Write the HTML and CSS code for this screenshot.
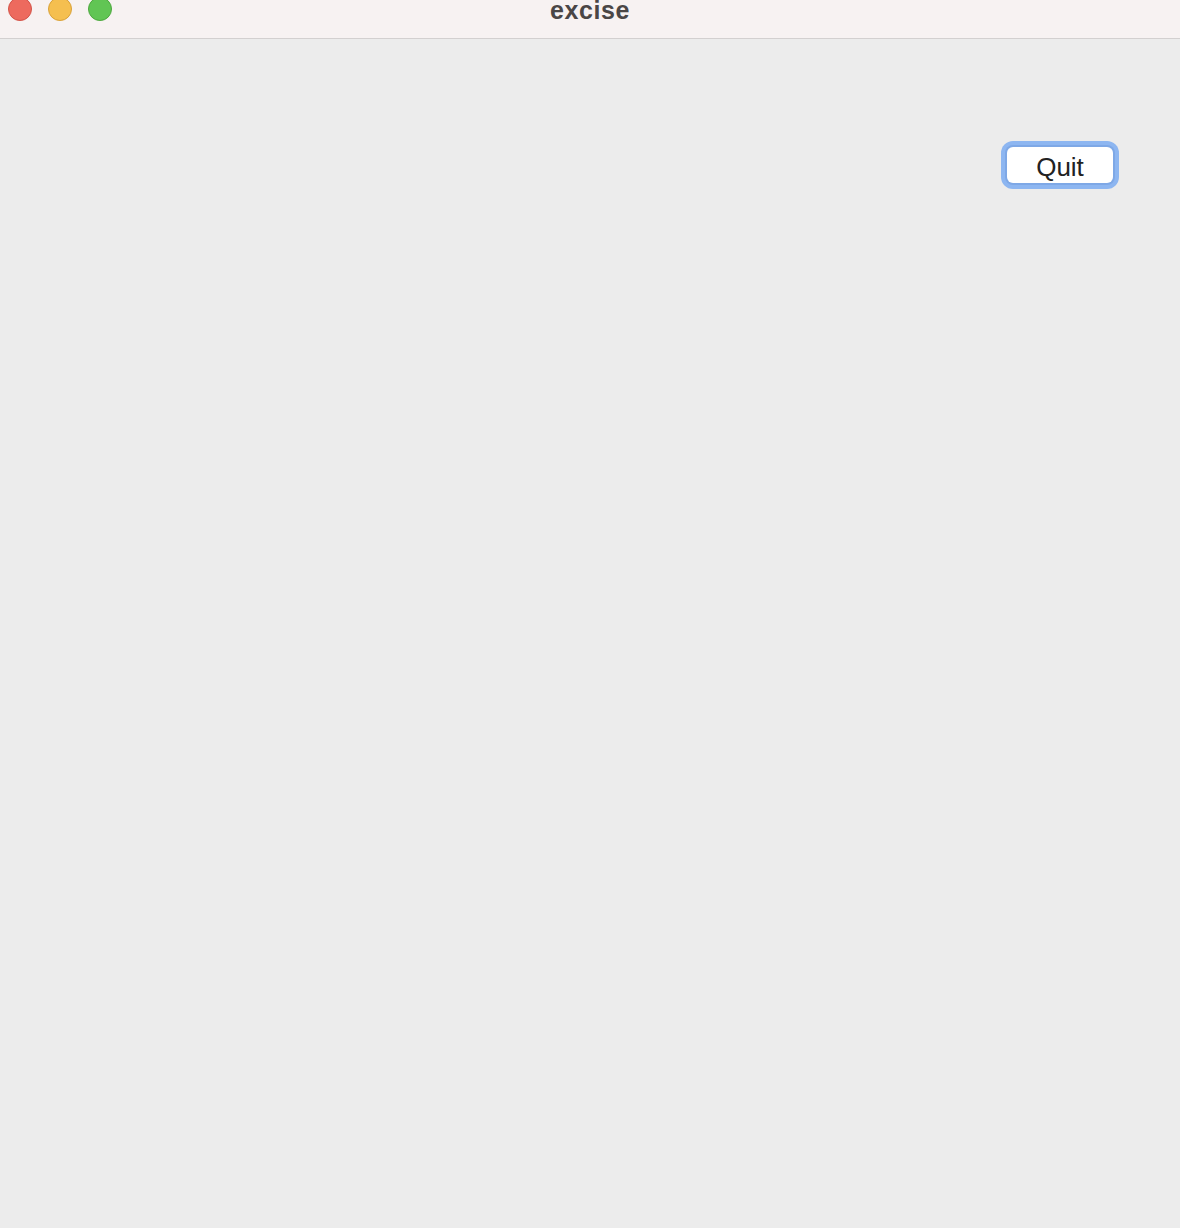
FILE: index.html
```html
<!DOCTYPE html>
<html>
<head>
<meta charset="utf-8">
<link rel="stylesheet" href="styles.css">
</head>
<body>
<div class="window">
  <div class="titlebar">
    <div class="lights">
      <span class="light red"></span>
      <span class="light yellow"></span>
      <span class="light green"></span>
    </div>
    <div class="title">excise</div>
  </div>
  <div class="content">
    <button class="quit">Quit</button>
  </div>
</div>
</body>
</html>
```

FILE: styles.css
```css
html, body {
  margin: 0;
  padding: 0;
  height: 100%;
}
body {
  background: #ececec;
  font-family: "Liberation Sans", Arial, sans-serif;
}
.window {
  display: flex;
  flex-direction: column;
  height: 100%;
}
.titlebar {
  position: relative;
  height: 38px;
  background: #f7f2f2;
  border-bottom: 1px solid #d3d0d0;
  flex: none;
}
.lights {
  position: absolute;
  left: 8px;
  top: -3px;
  display: flex;
  gap: 16px;
}
.light {
  width: 24px;
  height: 24px;
  border-radius: 50%;
  box-sizing: border-box;
}
.red { background: #ed6a5e; border: 1px solid #d35449; }
.yellow { background: #f5bf4f; border: 1px solid #d9a23a; }
.green { background: #61c554; border: 1px solid #4ea83f; }
.title {
  text-align: center;
  font-weight: bold;
  font-size: 25px;
  letter-spacing: 0.6px;
  color: #4a4646;
  line-height: 21px;
}
.content {
  flex: 1;
  display: flex;
  justify-content: flex-end;
  align-items: flex-start;
  padding: 108px 67px 0 0;
}
.quit {
  width: 106px;
  height: 36px;
  background: #fff;
  border: none;
  border-radius: 6px;
  box-shadow: 0 0 0 2px #7ea8e6, 0 0 0 6px #8db6f1;
  font-family: "Liberation Sans", Arial, sans-serif;
  font-size: 26px;
  color: #222;
  padding: 3px 0 0 0;
  line-height: 32px;
}
```
